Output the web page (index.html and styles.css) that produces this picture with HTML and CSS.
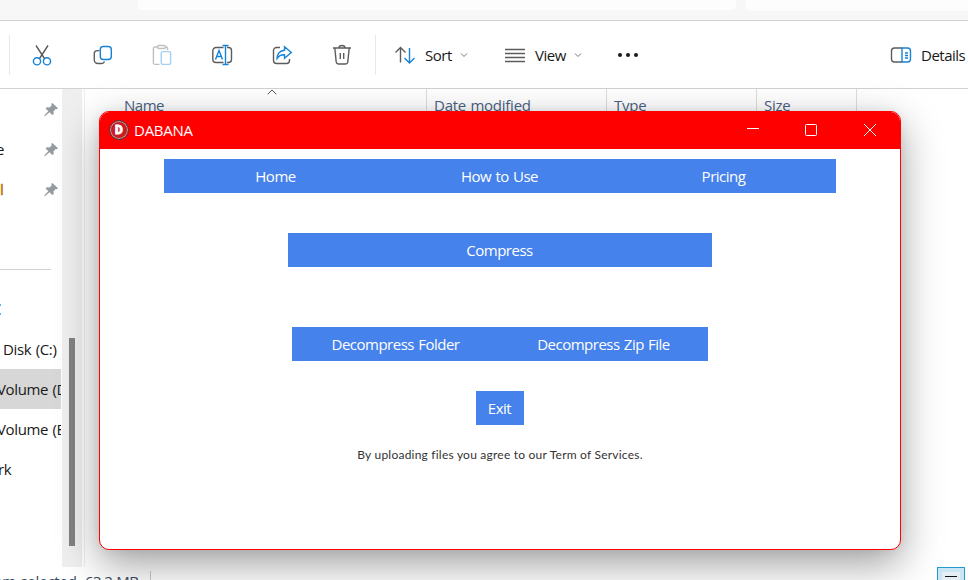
FILE: index.html
```html
<!DOCTYPE html>
<html lang="en">
<head>
<meta charset="utf-8">
<title>DABANA</title>
<link rel="stylesheet" href="styles.css">
</head>
<body>
<div class="explorer">
  <div class="address-row"><div class="address"></div><div class="search"></div></div>
  <div class="toolbar">
    <i class="divider first"></i>
    <svg class="icon" viewBox="0 0 24 24"><path d="M6 2.500 14.800 16M18 2.500 9.200 16" class="g"/><circle cx="7" cy="18.300" r="3.600" class="b"/><circle cx="17" cy="18.300" r="3.600" class="b"/></svg>
    <svg class="icon copy" viewBox="0 0 24 24"><path d="M8.500 7.600H6.300a3 3 0 0 0-3 3V17a3.500 3.500 0 0 0 3.500 3.500h3.700a3 3 0 0 0 3-2" class="g"/><rect x="9.300" y="3.500" width="11" height="13" rx="3" class="b"/></svg>
    <svg class="icon faded" viewBox="0 0 24 24"><path d="M7.500 4H5a1.600 1.600 0 0 0-1.600 1.600v14A1.600 1.600 0 0 0 5 21.400h4.500M15.500 4H16a1.600 1.600 0 0 1 1.600 1.600V7" class="g"/><rect x="7.500" y="2.500" width="8" height="3" rx="1.500" class="g"/><rect x="11.300" y="8.600" width="9.300" height="12.800" rx="1.500" class="b"/></svg>
    <svg class="icon" viewBox="0 0 24 24"><path d="M13.500 4.500H6a3.200 3.200 0 0 0-3.200 3.200v8.600A3.200 3.200 0 0 0 6 19.500h7.500M17 4.500h1.500a3 3 0 0 1 3 3v9a3 3 0 0 1-3 3H17" class="g"/><path d="M15.500 2.500v19M12.500 2.500h6M12.500 21.500h6M5.500 16.500 9 7.500l3.500 9M6.800 13.500h4.400" class="b"/></svg>
    <svg class="icon" viewBox="0 0 24 24"><path d="M10 4.500H6.500A3 3 0 0 0 3.500 7.500v10a3 3 0 0 0 3 3h10a3 3 0 0 0 3-3V16" class="g"/><path d="M14.500 3.800 21.300 9.500 14.500 15.300v-3.500c-4-.2-6 1.500-7.500 3.700 0-4.500 3-8 7.500-8.200z" class="b"/></svg>
    <svg class="icon trash" viewBox="0 0 24 24"><path d="M3 5h18M9 5a3 2.500 0 0 1 6 0M4.800 5l1.400 14a2.300 2.300 0 0 0 2.300 2h7a2.300 2.300 0 0 0 2.300-2L19.200 5M10.300 10v6M13.700 10v6" class="g"/></svg>
    <i class="divider second"></i>
    <svg class="icon sort" viewBox="0 0 24 24"><path d="M7.500 19.500v-15M2.500 9.500l5-5 5 5" class="g"/><path d="M16.500 5v15M11.500 15l5 5 5-5" class="b"/></svg>
    <span class="label sort-label">Sort</span>
    <svg class="chevron" viewBox="0 0 8 8"><path d="M1 2.500l3 3 3-3"/></svg>
    <svg class="icon view" viewBox="0 0 24 24"><path d="M2 6.500h20M2 10.500h20M2 14.500h20M2 18.500h20" class="g"/></svg>
    <span class="label view-label">View</span>
    <svg class="chevron" viewBox="0 0 8 8"><path d="M1 2.500l3 3 3-3"/></svg>
    <svg class="more" viewBox="0 0 20 4"><circle cx="2" cy="2" r="2"/><circle cx="10" cy="2" r="2"/><circle cx="18" cy="2" r="2"/></svg>
    <svg class="icon details" viewBox="0 0 24 24"><path d="M13 5H5.500a3 3 0 0 0-3 3v8a3 3 0 0 0 3 3H13" class="g"/><path d="M13 5h5.500a3 3 0 0 1 3 3v8a3 3 0 0 1-3 3H13zM16 10h3M16 12.500h3M16 15h3" class="b"/></svg>
    <span class="label details-label">Details</span>
  </div>
  <div class="main">
    <div class="sidebar">
      <div class="item"><svg class="pin" viewBox="0 0 14 14"><path d="M8.300 0 14 5.200 12.700 6.300 11.500 6 9.500 8.500 9.700 11 8.300 12 5.500 9.300 1.200 13 .2 13.200.5 12.200 4.300 8.200 1.700 5.500 2.700 4.300 5.400 4.500 7.700 2.400 7.200 1z"/></svg></div>
      <div class="item"><span class="tail-e">e</span><svg class="pin" viewBox="0 0 14 14"><path d="M8.300 0 14 5.200 12.700 6.300 11.500 6 9.500 8.500 9.700 11 8.300 12 5.500 9.300 1.200 13 .2 13.200.5 12.200 4.300 8.200 1.700 5.500 2.700 4.300 5.400 4.500 7.700 2.400 7.200 1z"/></svg></div>
      <div class="item"><span class="tail-l">l</span><svg class="pin" viewBox="0 0 14 14"><path d="M8.300 0 14 5.200 12.700 6.300 11.500 6 9.500 8.500 9.700 11 8.300 12 5.500 9.300 1.200 13 .2 13.200.5 12.200 4.300 8.200 1.700 5.500 2.700 4.300 5.400 4.500 7.700 2.400 7.200 1z"/></svg></div>
      <div class="rule"></div>
      <div class="item pc"><i></i></div>
      <div class="item disk">Disk (C:)</div>
      <div class="item volume selected">Volume (D:)</div>
      <div class="item volume">Volume (E:)</div>
      <div class="item network">rk</div>
    </div>
    <div class="scrollbar"><div class="thumb"></div></div>
    <div class="files">
      <div class="column name"><span>Name</span><svg class="caret" viewBox="0 0 10 6"><path d="M.7 5.300 5 1l4.300 4.300"/></svg></div>
      <div class="column date"><span>Date modified</span></div>
      <div class="column type"><span>Type</span></div>
      <div class="column size"><span>Size</span></div>
    </div>
  </div>
  <div class="status"><span>em selected</span><span class="amount">63.2 MB</span><i class="status-rule"></i><div class="view-toggle"><i></i></div></div>
</div>
<div class="window">
  <div class="titlebar">
    <div class="logo"><b>D</b></div>
    <span class="title">DABANA</span>
    <svg class="controls" viewBox="0 0 130 14"><path d="M0 5.500h12"/><rect x="58.500" y="1.500" width="11" height="11" rx="1"/><path d="M117 1l12 12M129 1l-12 12"/></svg>
  </div>
  <div class="content">
    <div class="nav"><button class="home">Home</button><button class="how">How to Use</button><button class="pricing">Pricing</button></div>
    <button class="compress">Compress</button>
    <div class="decompress"><button class="folder">Decompress Folder</button><button class="zip">Decompress Zip File</button></div>
    <button class="exit">Exit</button>
    <p class="terms">By uploading files you agree to our Term of Services.</p>
  </div>
</div>
</body>
</html>
```
FILE: styles.css
```css
* { box-sizing: border-box; }
body { margin: 0; width: 968px; height: 580px; overflow: hidden; position: relative; background: #fff; color: #191919; font: 15px/20px "Open Sans", "Noto Sans", sans-serif; letter-spacing: -0.5px; word-spacing: .8px; }
span { white-space: nowrap; }
.explorer { height: 580px; display: flex; flex-direction: column; overflow: hidden; }
.address-row { flex: none; height: 21px; padding-left: 138px; display: flex; gap: 10px; background: #f7f7f7; border-bottom: 1px solid #d2d2d2; }
.address { width: 598px; height: 10px; background: #fdfdfd; border-radius: 0 0 4px 4px; }
.search { flex: 1; height: 11px; background: #fdfdfd; border-radius: 0 0 0 4px; }
.toolbar { flex: none; height: 68px; display: flex; align-items: center; border-bottom: 1px solid #d2d2d2; }
.divider { width: 1px; height: 40px; background: #e8e8e8; }
.first { margin-left: 9px; margin-right: 20px; }
.second { margin-left: -15px; margin-right: 17px; }
.icon { flex: none; width: 24px; height: 24px; margin-right: 36px; fill: none; stroke-width: 1.4; }
.g { stroke: #5c5c5c; }
.b { stroke: #1683d8; }
.icon.copy { margin-left: 1px; margin-right: 35px; }
.faded { opacity: .38; }
.icon.sort { margin-right: 8px; }
.label { flex: none; padding-top: 1px; }
.sort-label { width: 35px; }
.chevron { flex: none; width: 8px; height: 8px; fill: none; stroke: #777; }
.icon.view { margin: 0 8px 0 35px; }
.view-label { width: 39px; }
.more { width: 20px; height: 4px; margin-left: 36px; fill: #1a1a1a; }
.icon.details { margin: 0 8px 0 auto; }
.details-label { width: 47px; }
.main { height: 478px; display: flex; }
.sidebar { width: 61px; overflow: hidden; }
.item { height: 40px; display: flex; align-items: center; color: #191919; white-space: nowrap; letter-spacing: -0.35px; }
.pin { width: 14px; height: 14px; margin-left: auto; margin-right: 3px; margin-top: 1px; fill: #919ba1; }
.tail-e { margin-left: -4px; }
.tail-l { color: #b9720d; -webkit-text-stroke: .5px #b9720d; }
.rule { width: 51px; height: 80px; border-top: 1px solid #d2d2d2; margin-top: 60px; margin-bottom: -60px; }
.pc i { width: 1px; height: 11px; border-top: 2px solid #52bce6; border-bottom: 2px solid #52bce6; }
.disk { padding-left: 3px; }
.volume { margin-left: -3px; }
.selected { background: #d7d7d7; }
.network { margin-left: -2px; }
.scrollbar { width: 20px; margin-left: 1px; padding: 249px 0 0 7px; background: #efefef; }
.thumb { width: 6px; height: 208px; background: #828282; }
.files { flex: 1; display: flex; margin-left: 2px; border-left: 1px solid #eee; }
.column { height: 40px; padding: 6px 0 0 7px; border-right: 1px solid #ddd; color: #4b6282; letter-spacing: -0.25px; }
.name { width: 342px; padding-left: 39px; display: flex; position: relative; letter-spacing: -0.5px; }
.date { width: 180px; }
.type { width: 150px; }
.size { width: 100px; }
.caret { position: absolute; left: 182px; top: 0; width: 10px; height: 6px; fill: none; stroke: #555; }
.status { height: 13px; display: flex; padding-top: 4px; color: #394a60; letter-spacing: -0.2px; }
.status > span { margin-left: -6px; width: 82px; }
.status > .amount { margin-left: 9px; width: 60px; letter-spacing: -0.6px; }
.status-rule { width: 1px; height: 9px; background: #ccc; margin-left: 5px; }
.view-toggle { width: 28px; height: 20px; margin: -4px 3px 0 auto; border: 1px solid #249bd0; background: #cae5f3; padding: 4px; }
.view-toggle i { display: block; height: 16px; background: #e4eef3; padding: 4px 3px; }
.view-toggle i::before { content: ""; display: block; height: 1px; background: #111; }
.window { position: absolute; left: 99px; top: 111px; width: 802px; height: 439px; border: 1px solid #f00; border-radius: 10px; background: #fff; overflow: hidden; box-shadow: 0 14px 40px rgba(0,0,0,.38), 0 0 12px rgba(0,0,0,.06); }
.titlebar { height: 37px; display: flex; align-items: center; padding-left: 9px; background: #f00; color: #fff; }
.logo { width: 20px; height: 20px; margin-top: -1px; border-radius: 50%; background: #c91c25; border: 1px solid #5d3838; box-shadow: inset 0 0 0 1px #c4a0a0; display: flex; align-items: center; justify-content: center; }
.logo b { font: 900 12px/18px Roboto, sans-serif; letter-spacing: 0; -webkit-text-stroke: .8px #fff; }
.title { margin-left: 5px; padding-bottom: 2px; letter-spacing: -0.25px; }
.controls { width: 130px; height: 14px; margin: -1px 23px 0 auto; fill: none; stroke: #fff; }
.content { display: flex; flex-direction: column; align-items: center; padding-top: 10px; }
button { flex: none; height: 34px; padding: 0 1px 1px 0; border: 0; background: #4682eb; color: #fff; font: inherit; letter-spacing: inherit; word-spacing: inherit; }
.nav { display: flex; width: 672px; height: 34px; margin-bottom: 40px; }
.nav button { flex: 1; }
.compress { width: 424px; margin-bottom: 60px; }
.decompress { display: flex; width: 416px; margin-bottom: 30px; }
.decompress button { flex: 1; }
.exit { width: 48px; }
.terms { margin: 20px 0 0; font: 12px/20px Lato, sans-serif; letter-spacing: .22px; word-spacing: 0; color: #333; }
```
